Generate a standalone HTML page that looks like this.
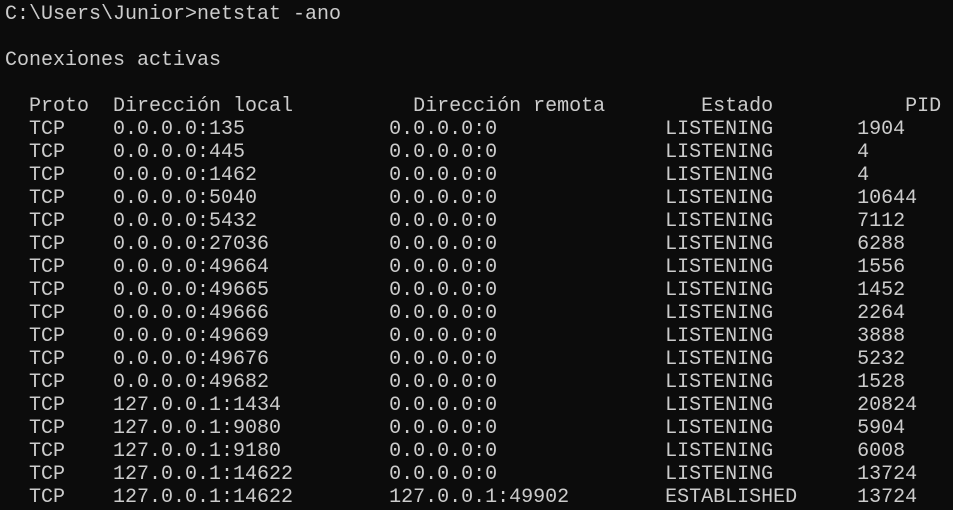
<!DOCTYPE html>
<html><head><meta charset="utf-8"><style>
html,body{margin:0;padding:0;background:#0c0c0c;width:953px;height:510px;overflow:hidden}
pre{margin:0;position:absolute;left:5px;top:3px;font-family:"Liberation Mono",monospace;font-size:20px;line-height:23px;color:#cccccc;white-space:pre}
</style></head><body><pre>C:\Users\Junior&gt;netstat -ano

Conexiones activas

  Proto  Dirección local          Dirección remota        Estado           PID
  TCP    0.0.0.0:135            0.0.0.0:0              LISTENING       1904
  TCP    0.0.0.0:445            0.0.0.0:0              LISTENING       4
  TCP    0.0.0.0:1462           0.0.0.0:0              LISTENING       4
  TCP    0.0.0.0:5040           0.0.0.0:0              LISTENING       10644
  TCP    0.0.0.0:5432           0.0.0.0:0              LISTENING       7112
  TCP    0.0.0.0:27036          0.0.0.0:0              LISTENING       6288
  TCP    0.0.0.0:49664          0.0.0.0:0              LISTENING       1556
  TCP    0.0.0.0:49665          0.0.0.0:0              LISTENING       1452
  TCP    0.0.0.0:49666          0.0.0.0:0              LISTENING       2264
  TCP    0.0.0.0:49669          0.0.0.0:0              LISTENING       3888
  TCP    0.0.0.0:49676          0.0.0.0:0              LISTENING       5232
  TCP    0.0.0.0:49682          0.0.0.0:0              LISTENING       1528
  TCP    127.0.0.1:1434         0.0.0.0:0              LISTENING       20824
  TCP    127.0.0.1:9080         0.0.0.0:0              LISTENING       5904
  TCP    127.0.0.1:9180         0.0.0.0:0              LISTENING       6008
  TCP    127.0.0.1:14622        0.0.0.0:0              LISTENING       13724
  TCP    127.0.0.1:14622        127.0.0.1:49902        ESTABLISHED     13724</pre></body></html>
